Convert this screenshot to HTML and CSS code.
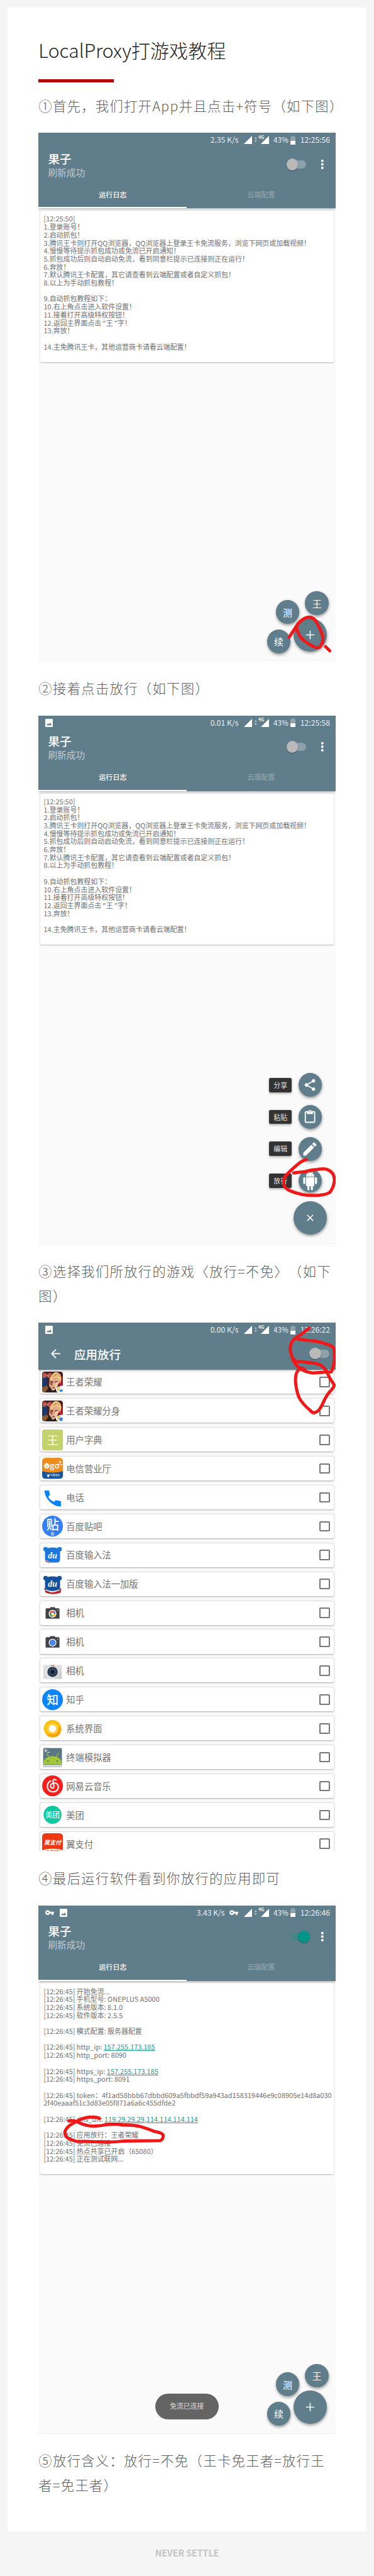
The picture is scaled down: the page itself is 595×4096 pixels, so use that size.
FILE: index.html
```html
<!DOCTYPE html>
<html lang="zh-CN">
<head>
<meta charset="utf-8">
<title>LocalProxy打游戏教程</title>
<link rel="stylesheet" href="styles.css">
</head>
<body>
<svg class="defs" aria-hidden="true">
  <symbol id="signals" viewBox="0 0 43 16">
    <path d="M14 1v14H0z" fill="#fff"/>
    <path d="M18.2 6.2l2-2.8 2 2.8zM18.2 9l2 2.8 2-2.8z" fill="#cfd8dc"/>
    <path d="M43 1v14H29z" fill="#fff"/>
    <path d="M24.5 0h10v7.6h-10z" fill="#607d8b"/>
  </symbol>
  <symbol id="battery" viewBox="0 0 9 15">
    <path d="M2.5 0h4v1.5H9V15H0V1.5h2.500z" fill="#8fa3ad"/>
    <path d="M0 8.700h9V15H0z" fill="#fff"/>
  </symbol>
  <symbol id="picture" viewBox="0 0 13 14">
    <rect width="13" height="14" rx="1.400" fill="#fff"/>
    <path d="M2.300 11l2.500-3.600L6.500 9.500 8.600 6.500 11 11z" fill="#607d8b"/>
  </symbol>
  <symbol id="key" viewBox="0 0 15 9">
    <path d="M8.200 3H15v3h-1.300v2.600h-3V6H8.200A4.200 4.200 0 1 1 8.200 3zM4.200 3a1.500 1.500 0 1 0 0 3 1.500 1.500 0 0 0 0-3z" fill="#fff" fill-rule="evenodd"/>
  </symbol>
  <symbol id="dots" viewBox="0 0 6 18">
    <circle cx="3" cy="3" r="2.200" fill="#fff"/><circle cx="3" cy="9" r="2.200" fill="#fff"/><circle cx="3" cy="15" r="2.200" fill="#fff"/>
  </symbol>
  <symbol id="plus" viewBox="0 0 16 16">
    <path d="M8 .8v14.400M.8 8h14.400" stroke="#fff" stroke-width="1.700"/>
  </symbol>
  <symbol id="hero" viewBox="0 0 36 36">
    <rect width="36" height="36" rx="5" fill="#4b1c22"/>
    <path d="M0 10l8-2 2 18-6 6L0 28z" fill="#1f3768"/>
    <path d="M27 8l9 2v17l-8-5z" fill="#b3142b"/>
    <path d="M6 36l5-10 12 3 4 7z" fill="#2a211f"/>
    <path d="M0 27l8-3 3 4-6 8H4q-4 0-4-4z" fill="#8a5a2c"/>
    <path d="M13 9l14-2 3 10-5 12-7 4-6-9z" fill="#e0a987"/>
    <path d="M14 15l5 2-2 8-4-4z" fill="#a85f4c"/>
    <path d="M26 13l3 5-5 11-6 4 3-7z" fill="#f3c9a8"/>
    <path d="M15 9Q19 0 26 1q8 3 7 12l-2 9-2-9-5-4-6 3-3 8z" fill="#edc983"/>
    <path d="M20 6l6-2 4 5M18 9l7-3" stroke="#b27d43" stroke-width="1" fill="none"/>
    <path d="M15 17l4 1.400M22 18l5-1.400M18 28l4-.4" stroke="#4b2319" stroke-width="1.400"/>
    <path d="M2 3h5l-.5 1.800H4l-.3 1 3 .2-.8 4H1l.3-1.700h2.600l.3-1H1zM11 3h5l-.5 1.800H13l-.3 1 3 .2-.8 4H10l.3-1.700h2.600l.3-1H10zM7 6h1V5h1.500v1h1v1.500h-1v1H8v-1H7z" fill="#d3352b" stroke="#f4d4c0" stroke-width=".4"/>
    <path d="M24 29q4-5 12-5v7q0 5-5 5h-4q-4-3-3-7z" fill="#fff"/>
    <path d="M33 26q-7-.5-7 5 .5 3 3 3-1-5 4-8z" fill="#f7bd2a"/>
    <path d="M30 31h4v-2l2 3q-1 3-4 3-3-1-2-4z" fill="#2f8fe6"/>
  </symbol>
  <symbol id="bear" viewBox="0 0 36 36">
    <path d="M2 8q0-4 4-4 3 0 4 2 8-2 16 0 1-2 4-2 4 0 4 4 0 3-3 4v13q0 6-6 6H11q-6 0-6-6V12Q2 11 2 8z"/>
  </symbol>
  <symbol id="camera" viewBox="0 0 36 36">
    <path d="M13 10l1.500-2h7l1.500 2h5q2 0 2 2v16H6V12q0-2 2-2z" fill="#424449"/>
    <circle cx="18" cy="19.500" r="6.700" fill="#fff"/><circle cx="27" cy="13.500" r=".9" fill="#ccc"/>
  </symbol>
</svg>

<main class="sheet">
  <h1 class="title">LocalProxy打游戏教程</h1>
  <div class="rule"></div>

  <p class="step">①首先，我们打开App并且点击+符号（如下图）</p>

  <section class="phone">
    <header class="bar">
      <div class="status">
        <span class="speed">2.35 K/s</span>
        <span class="net"><svg><use href="#signals"/></svg><b>4G</b></span>
        <span class="pct">43%</span><svg class="batt"><use href="#battery"/></svg><span class="clock">12:25:56</span>
      </div>
      <div class="head">
        <div class="names"><div class="app">果子</div><div class="sub">刷新成功</div></div>
        <span class="switch"></span>
        <svg class="more"><use href="#dots"/></svg>
      </div>
      <nav class="tabs"><span class="on">运行日志</span><span>云端配置</span></nav>
    </header>
    <div class="log guide">[12:25:50]
1.登录账号！
2.启动抓包！
3.腾讯王卡则打开QQ浏览器，QQ浏览器上登录王卡免流服务，浏览下网页或加载视频！
4.慢慢等待提示抓包成功或免流已开启通知！
5.抓包成功后则自动启动免流，看到同意栏提示已连接则正在运行！
6.奔放！
7.默认腾讯王卡配置，其它请查看到云端配置或者自定义抓包！
8.以上为手动抓包教程！

9.自动抓包教程如下：
10.右上角点击进入软件设置！
11.接着打开高级特权按钮！
12.返回主界面点击<i>“</i>王<i>”</i>字！
13.奔放！

14.主免腾讯王卡，其他运营商卡请看云端配置！</div>
    <span class="fab mini wang">王</span>
    <span class="fab mini ce">测</span>
    <span class="fab mini xu">续</span>
    <span class="fab big"><svg><use href="#plus"/></svg></span>
    <svg class="ink" viewBox="0 0 508 903.5"><path d="M429.100 863L444.200 840Q450 833 457 830Q467 826 474 834Q482 846 487 863Q488 872 481 880.300Q477 882 470 878.500Q456 871 449 863Q441 851 442.200 843M491.600 879l7 7"/></svg>
  </section>

  <p class="step">②接着点击放行（如下图）</p>

  <section class="phone">
    <header class="bar">
      <div class="status">
        <svg class="pic"><use href="#picture"/></svg>
        <span class="speed">0.01 K/s</span>
        <span class="net"><svg><use href="#signals"/></svg><b>4G</b></span>
        <span class="pct">43%</span><svg class="batt"><use href="#battery"/></svg><span class="clock">12:25:58</span>
      </div>
      <div class="head">
        <div class="names"><div class="app">果子</div><div class="sub">刷新成功</div></div>
        <span class="switch"></span>
        <svg class="more"><use href="#dots"/></svg>
      </div>
      <nav class="tabs"><span class="on">运行日志</span><span>云端配置</span></nav>
    </header>
    <div class="log guide">[12:25:50]
1.登录账号！
2.启动抓包！
3.腾讯王卡则打开QQ浏览器，QQ浏览器上登录王卡免流服务，浏览下网页或加载视频！
4.慢慢等待提示抓包成功或免流已开启通知！
5.抓包成功后则自动启动免流，看到同意栏提示已连接则正在运行！
6.奔放！
7.默认腾讯王卡配置，其它请查看到云端配置或者自定义抓包！
8.以上为手动抓包教程！

9.自动抓包教程如下：
10.右上角点击进入软件设置！
11.接着打开高级特权按钮！
12.返回主界面点击<i>“</i>王<i>”</i>字！
13.奔放！

14.主免腾讯王卡，其他运营商卡请看云端配置！</div>
    <div class="dial">
      <div class="act"><span class="tip">分享</span><span class="fab mini"><svg viewBox="0 0 24 24"><path d="M18 16.080c-.76 0-1.440.3-1.960.77L8.910 12.700c.05-.23.090-.46.090-.7s-.04-.47-.09-.7l7.050-4.110A2.990 2.990 0 1 0 15 5c0 .24.040.47.090.7L8.040 9.810A3 3 0 1 0 8.040 14.190l7.120 4.160c-.05.21-.08.43-.08.65a2.920 2.920 0 1 0 2.920-2.920z"/></svg></span></div>
      <div class="act"><span class="tip">粘贴</span><span class="fab mini"><svg viewBox="0 0 24 24"><path d="M19 2h-4.180C14.400.84 13.300 0 12 0S9.600.84 9.180 2H5c-1.100 0-2 .9-2 2v16c0 1.100.9 2 2 2h14c1.100 0 2-.9 2-2V4c0-1.100-.9-2-2-2zm-7 0c.55 0 1 .45 1 1s-.45 1-1 1-1-.45-1-1 .45-1 1-1zm7 18H5V4h2v3h10V4h2z"/></svg></span></div>
      <div class="act"><span class="tip">编辑</span><span class="fab mini"><svg class="xl" viewBox="0 0 24 24"><path d="M3 17.250V21h3.750L17.810 9.940l-3.750-3.750zM20.710 7.040a1 1 0 0 0 0-1.410l-2.340-2.340a1 1 0 0 0-1.410 0l-1.830 1.830 3.750 3.750z"/></svg></span></div>
      <div class="act"><span class="tip">放行</span><span class="fab mini"><svg class="droid" viewBox="0 0 24 28"><path d="M6 9h12v12q0 1-1 1h-1v4.500a1.500 1.500 0 0 1-3 0V22h-2v4.500a1.500 1.500 0 0 1-3 0V22H7q-1 0-1-1zM3.500 9Q5 9 5 10.500v7a1.500 1.500 0 0 1-3 0v-7Q2 9 3.500 9zM20.500 9q1.500 0 1.500 1.500v7a1.500 1.500 0 0 1-3 0v-7Q19 9 20.500 9zM6 8q0-3.700 3-5L8 1l.6-.4L10 2.600q2-.6 4 0L15.400.6 16 1l-1 2q3 1.300 3 5zM9 5v1h1V5zm5 0v1h1V5z"/></svg></span></div>
    </div>
    <span class="fab big close"><svg><use href="#plus"/></svg></span>
    <svg class="ink" viewBox="0 0 508 903.5"><path d="M458.900 759.100Q451 761 444.200 767Q431 778 424 786Q418 793 420.500 802.500Q422 809 432 813Q451 821 472.800 820.500Q492 820 499 815Q506 806 506.700 794.100Q507 782 495.200 776.500Q490 774 478 776Q465 777 458 779.500L436.900 782.100"/></svg>
  </section>

  <p class="step">③选择我们所放行的游戏〈放行=不免〉（如下图）</p>

  <section class="phone">
    <header class="bar short">
      <div class="status">
        <svg class="pic"><use href="#picture"/></svg>
        <span class="speed">0.00 K/s</span>
        <span class="net"><svg><use href="#signals"/></svg><b>4G</b></span>
        <span class="pct">43%</span><svg class="batt"><use href="#battery"/></svg><span class="clock">12:26:22</span>
      </div>
      <div class="head2">
        <svg class="back" viewBox="0 0 16 16"><path d="M16 7H3.800l5.600-5.600L8 0 0 8l8 8 1.400-1.400L3.800 9H16z" fill="#fff"/></svg>
        <span class="app">应用放行</span>
        <span class="switch"></span>
      </div>
    </header>
    <ul class="apps">
      <li><svg viewBox="0 0 36 36"><use href="#hero"/></svg><span>王者荣耀</span><i></i></li>
      <li><svg viewBox="0 0 36 36"><use href="#hero"/><path d="M30 29h5v6h-5z" fill="#3f84dd"/></svg><span>王者荣耀分身</span><i></i></li>
      <li><svg viewBox="0 0 36 36"><rect width="36" height="36" rx="4" fill="#c3d26b"/><text x="18" y="25.500" font-size="20" fill="#fff">王</text></svg><span>用户字典</span><i></i></li>
      <li><svg viewBox="0 0 36 36"><rect width="36" height="36" rx="6" fill="#ee8d1c"/><path d="M0 23q18 5 36 0v7q0 6-6 6H6q-6 0-6-6z" fill="#17569f"/><circle cx="8" cy="14" r="4.700" fill="#fff"/><text x="8" y="16" font-size="5.500" fill="#ee8d1c">欢</text><text x="21.500" y="18.500" font-size="14" fill="#fff" class="go">go</text><circle cx="31" cy="7" r="1.700" fill="#fff"/><circle cx="29" cy="11" r="1.300" fill="#fff"/><circle cx="33" cy="11.500" r="1.300" fill="#fff"/><path d="M7 28l3 1.500 4-2-3 6H9.500l-.5-3z" fill="#fff"/><text x="22" y="31.500" font-size="4" fill="#fff">中国电信</text></svg><span>电信营业厅</span><i></i></li>
      <li><svg viewBox="0 0 36 36"><path d="M4 6.500h8l1.500 8-3 3q4 6 10 8.500l3-3 9 2v9q-10 .5-19-8T4 6.500z" fill="#0a84f5"/></svg><span>电话</span><i></i></li>
      <li><svg viewBox="0 0 36 36"><circle cx="18" cy="18" r="18" fill="#3580f6"/><text x="18" y="23.500" font-size="22" fill="#fff" class="med">贴</text><path d="M15.300 30l2.700-2 2.700 2M16 31h4M16.400 31v2.800h3.200V31" stroke="#fff" stroke-width=".9" fill="none"/></svg><span>百度贴吧</span><i></i></li>
      <li><svg viewBox="0 0 36 36"><use href="#bear" fill="#1a77dc"/><path d="M5 27q6 0 8 4-6 .5-8-4z" fill="#fff"/><path d="M6 28l6 3" stroke="#d22" stroke-width="1.500"/><text x="18" y="24" font-size="15" fill="#fff" class="du">du</text></svg><span>百度输入法</span><i></i></li>
      <li><svg viewBox="0 0 36 36"><path d="M3 24q14 16 30 1l-1 8q-12 5-26 0z" fill="#c4262b"/><path d="M3 22q13 16 30 1" stroke="#fff" stroke-width="2" fill="none"/><use href="#bear" fill="#14529f"/><path d="M6 28q12 6 24 0" stroke="#fff" stroke-width="1.500" fill="none"/><text x="18" y="22.500" font-size="15" fill="#fff" class="du">du</text></svg><span>百度输入法一加版</span><i></i></li>
      <li><svg viewBox="0 0 36 36"><use href="#camera"/><circle cx="18" cy="19.500" r="3.800" fill="none" stroke="#e54b3c" stroke-width="2.700"/><path d="M14.200 19.500a3.800 3.800 0 0 0 3.800 3.800" stroke="#3aa757" stroke-width="2.700" fill="none"/><path d="M18 23.300a3.800 3.800 0 0 0 3.800-3.800" stroke="#fbc02d" stroke-width="2.700" fill="none"/><path d="M21.800 19.500a3.800 3.800 0 0 0-2-3.300" stroke="#3f7de8" stroke-width="2.700" fill="none"/></svg><span>相机</span><i></i></li>
      <li><svg viewBox="0 0 36 36"><use href="#camera"/><circle cx="18" cy="19.500" r="5.400" fill="#4a85e8"/></svg><span>相机</span><i></i></li>
      <li><svg viewBox="0 0 36 36"><rect x="2" y="8" width="32" height="24" rx="1.500" fill="#dedede"/><path d="M27 14l7 7v11H20z" fill="#cfcfcf"/><path d="M15 8h2v3h-2z" fill="#2b9ae0"/><path d="M17 8h2v3h-2z" fill="#f3b52f"/><path d="M19 8h2v3h-2z" fill="#e0452f"/><circle cx="18" cy="20" r="10.300" fill="#f4f4f4"/><circle cx="18" cy="20" r="9" fill="#2b3c50"/><circle cx="18" cy="20" r="5.500" fill="#3c526b"/><circle cx="18" cy="20" r="3.500" fill="#0f1c29"/></svg><span>相机</span><i></i></li>
      <li><svg viewBox="0 0 36 36"><circle cx="18" cy="18" r="18" fill="#0c84fb"/><text x="18" y="25.500" font-size="20.500" fill="#fff" class="med">知</text></svg><span>知乎</span><i></i></li>
      <li><svg viewBox="0 0 36 36"><circle cx="18" cy="18" r="15" fill="#fdc010"/><path d="M18 33q-7 0-10-4l8-4 12-11 5 3q0 16-15 16z" fill="#faa307"/><circle cx="18" cy="18" r="10" fill="#ffcf45"/><circle cx="18" cy="18" r="6" fill="#fff"/></svg><span>系统界面</span><i></i></li>
      <li><svg viewBox="0 0 36 36"><rect x="1.500" y="4" width="33" height="31" rx="1.500" fill="#c9d3da"/><rect x="2" y="1.500" width="32" height="29" rx="1.500" fill="#5c7784"/><path d="M2 29q1-10 9-12L7 11l1-.8 4.500 6.300q5.500-2 11 0L28 10.200l1 .8-4 6q8 2 9 12v.500H2z" fill="#a4c639"/><circle cx="10" cy="24" r="1.400" fill="#5c7784"/><circle cx="26" cy="24" r="1.400" fill="#5c7784"/><path d="M4 4l4 2-4 2M9 9h4" stroke="#fff" fill="none" stroke-width="1.200"/></svg><span>终端模拟器</span><i></i></li>
      <li><svg viewBox="0 0 36 36"><circle cx="18" cy="18" r="18" fill="#f5201e"/><path d="M24 8q-4-2.500-5 .5-.3 1 1 7 1.300 6-1.500 6.500-3.500.2-4-3.500 0-4.500 6-5.500 7 0 7.500 7-.5 8-9 8.500-9-.5-10-9Q9 12 15 9.500" stroke="#fff" stroke-width="2.200" fill="none" stroke-linecap="round"/></svg><span>网易云音乐</span><i></i></li>
      <li><svg viewBox="0 0 36 36"><circle cx="18" cy="18" r="15.500" fill="#0bcaa0"/><text x="18" y="22.700" font-size="12.500" fill="#fff" class="med">美团</text></svg><span>美团</span><i></i></li>
      <li><svg viewBox="0 0 36 36"><rect width="36" height="36" rx="6" fill="#ef3712"/><path d="M0 29q18-5 36 0v7H0z" fill="#fdf1dc"/><text x="18" y="19" font-size="9.800" fill="#fff" class="pay">翼支付</text><path d="M8 30.500h4M10 29v2M15 29.500h3M20 30h3M25 29.500l3 1" stroke="#e8452a" stroke-width="1.500"/></svg><span>翼支付</span><i></i></li>
    </ul>
    <svg class="ink" viewBox="0 0 508 903.5"><path d="M463.400 9.500L450 20Q443 24 438 28Q430 36 431 47Q433 57 437 66Q440 72 444 75Q453 84 468.700 86.200Q485 85 501 84.500Q506 76 506.500 60Q507 47 505 43Q500 38 490 36Q477 31 465 31L444.200 28.200M438 63L438.100 67Q450 66 461 68.200Q478 69 485 74Q490 78 493 83Q498 95 506.500 107Q505 112 498 119Q492 126 486 140Q480 152 475 153Q470 156 466 151Q451 138 446 128Q441 115 440 100Q440 85 445 81.500Q451 75 456 81"/></svg>
  </section>

  <p class="step">④最后运行软件看到你放行的应用即可</p>

  <section class="phone">
    <header class="bar">
      <div class="status">
        <svg class="key first"><use href="#key"/></svg>
        <svg class="pic second"><use href="#picture"/></svg>
        <span class="speed">3.43 K/s</span>
        <svg class="key"><use href="#key"/></svg>
        <span class="net"><svg><use href="#signals"/></svg><b>4G</b></span>
        <span class="pct">43%</span><svg class="batt"><use href="#battery"/></svg><span class="clock">12:26:46</span>
      </div>
      <div class="head">
        <div class="names"><div class="app">果子</div><div class="sub">刷新成功</div></div>
        <span class="switch active"></span>
        <svg class="more"><use href="#dots"/></svg>
      </div>
      <nav class="tabs"><span class="on">运行日志</span><span>云端配置</span></nav>
    </header>
    <div class="log output">[12:26:45] 开始免流...
[12:26:45] 手机型号: ONEPLUS A5000
[12:26:45] 系统版本: 8.1.0
[12:26:45] 软件版本: 2.5.5

[12:26:45] 模式配置: 服务器配置

[12:26:45] http_ip: <u>157.255.173.185</u>
[12:26:45] http_port: 8090

[12:26:45] https_ip: <u>157.255.173.185</u>
[12:26:45] https_port: 8091

[12:26:45] token：4f1ad58bbb67dbbd609a5fbbdf59a943ad158319446e9c08905e14d8a030
2f40eaaaf51c3d83e05f871a6a6c455dfde2

[12:26:45] dns_url: <u>119.29.29.29</u>,<u>114.114.114.114</u>

[12:26:45] 应用放行：王者荣耀
[12:26:45] 免流已连接
[12:26:45] 热点共享已开启（65080）
[12:26:45] 正在测试联网...</div>
    <span class="toast">免流已连接</span>
    <span class="fab mini wang">王</span>
    <span class="fab mini ce">测</span>
    <span class="fab mini xu">续</span>
    <span class="fab big"><svg><use href="#plus"/></svg></span>
    <svg class="ink" viewBox="0 0 508 903.5"><path d="M52.400 368.300Q62 367 69 371Q82 377 95 377.300Q107 377 117.700 374.500Q132 373 146.200 375.300Q163 375 174.800 378Q188 382 199.300 386.500Q214 389 213.800 394Q213 401 208.300 402L146.200 402.700Q128 405 113.600 404.300L64.600 403Q53 400 49 396.500Q44 391 46 385Q50 376 66 369Q72 365 80 363Q91 361 97 362Q102 362 104.600 364.300"/></svg>
  </section>

  <p class="step">⑤放行含义：放行=不免（王卡免王者=放行王者=免王者）</p>
</main>
<footer class="foot">NEVER SETTLE</footer>
</body>
</html>
```

FILE: styles.css
```css
/* 1rem is one sixty-fourth of the window's width */
html { font-size: 1.5625vw; }
* { box-sizing: border-box; }
body {
  margin: 0;
  background: #f5f5f5;
  font-family: "Noto Sans CJK SC", sans-serif;
  font-size: 1.2rem;
  text-spacing-trim: space-all;
}
.defs { position: absolute; width: 0; height: 0; }

.sheet {
  margin: 1.27rem 1.27rem 0;
  padding: 4.6rem 5.33rem 3.29rem;
  background: #fff;
}
.title {
  margin: 0;
  height: 5.2rem;
  line-height: 5.2rem;
  font-size: 3.24rem;
  font-weight: 300;
  color: #1c1c1c;
  white-space: nowrap;
}
.rule { width: 12.86rem; height: .54rem; margin-top: 2.45rem; background: #b20304; }
.step {
  margin: 2.56rem -.6rem 2.56rem 0;
  font-size: 2.29rem;
  line-height: 4.18rem;
  letter-spacing: .148rem;
  font-weight: 300;
  color: #606060;
}
.rule + .step { margin-top: 1.95rem; white-space: nowrap; }

.phone {
  position: relative;
  width: 50.8rem;
  height: 90.35rem;
  overflow: hidden;
  background: #fafafa;
  box-shadow: inset 0 -.1rem #f0f0f0;
}
.bar {
  position: relative;
  display: flex;
  flex-direction: column;
  height: 12.9rem;
  background: #607d8b;
  box-shadow: 0 .1rem .4rem rgba(0, 0, 0, .35);
}
.bar.short { height: 8.08rem; z-index: 1; }
.status {
  display: flex;
  align-items: center;
  height: 2.46rem;
  padding: 0 .8rem 0 1.15rem;
  color: #eceff1;
  font-size: 1.31rem;
  line-height: 2.46rem;
  white-space: nowrap;
}
.pic { width: 1.3rem; height: 1.4rem; }
.pic.second { margin-left: .95rem; }
.key { width: 1.5rem; height: .9rem; margin-left: .85rem; }
.key.first { margin-left: 0; }
.speed { margin-left: auto; }
.net { position: relative; display: flex; width: 4.3rem; margin: 0 .8rem 0 .9rem; }
.net svg { width: 4.3rem; height: 1.6rem; }
.net b { position: absolute; left: 2.5rem; top: -.05rem; font-size: .78rem; line-height: .8rem; }
.pct { width: 2.45rem; font-size: 1.26rem; }
.batt { width: .9rem; height: 1.5rem; margin: 0 .8rem 0 .45rem; }
.clock { width: 5.2rem; }

.head { display: flex; align-items: center; height: 5.8rem; padding: 0 1.9rem 0 1.62rem; }
.names { flex: 1; color: #fff; }
.app { font-size: 2rem; line-height: 2.7rem; font-weight: 500; color: #fff; }
.sub { font-size: 1.58rem; line-height: 2.2rem; color: #bfcbd1; }
.switch { position: relative; width: 3.4rem; height: 2rem; margin-right: 2.5rem; }
.switch::before {
  content: "";
  position: absolute;
  right: 0; top: .3rem;
  width: 2.9rem; height: 1.4rem;
  border-radius: .7rem;
  background: #8ea2ac;
}
.switch::after {
  content: "";
  position: absolute;
  left: 0; top: 0;
  width: 2rem; height: 2rem;
  border-radius: 50%;
  background: #b9b9b9;
  box-shadow: 0 .1rem .2rem rgba(0, 0, 0, .35);
}
.switch.active { left: .7rem; }
.switch.active::before { left: 0; right: auto; background: #48858a; }
.switch.active::after { left: 1.3rem; background: #009688; }
.more { width: .6rem; height: 1.8rem; }
.tabs { display: flex; flex: 1; }
.tabs span {
  flex: 1;
  padding-top: 1.35rem;
  text-align: center;
  font-size: 1.19rem;
  line-height: 1.8rem;
  font-weight: 500;
  color: #90a4ae;
}
.tabs .on { color: #fff; border-bottom: .26rem solid #fff; }

.log {
  margin: .4rem .28rem 0;
  padding: .68rem .6rem 0;
  border-radius: .3rem;
  background: #fff;
  box-shadow: 0 .1rem .2rem rgba(0, 0, 0, .28);
  color: #707070;
  font-size: 1.177rem;
  line-height: 1.367rem;
  white-space: pre;
}
.guide { height: 25.9rem; }
.output { height: 32.65rem; }
.log i { display: inline-block; width: .8rem; font-family: "Noto Sans", sans-serif; text-align: center; line-height: 1rem; }
.log u { color: #26998c; text-underline-offset: .1rem; }

.fab {
  display: flex;
  align-items: center;
  justify-content: center;
  border-radius: 50%;
  background: #607d8b;
  box-shadow: .05rem .25rem .45rem rgba(0, 0, 0, .38);
  color: #fff;
}
.mini { width: 4.04rem; height: 4.04rem; font-size: 1.6rem; }
.mini svg { width: 2.4rem; height: 2.4rem; fill: #fff; }
.mini .xl { width: 3rem; height: 3rem; }
.mini .droid { width: 3.1rem; height: 3.3rem; }
.wang, .ce, .xu, .big { position: absolute; }
.wang { left: 45.62rem; top: 78.41rem; }
.ce { left: 40.58rem; top: 79.9rem; }
.xu { left: 39.09rem; top: 84.92rem; }
.big { left: 43.61rem; top: 83rem; width: 5.7rem; height: 5.7rem; }
.big svg { width: 1.6rem; height: 1.6rem; }
.close svg { transform: rotate(45deg); }
.dial { position: absolute; right: 2.32rem; top: 61.16rem; display: grid; gap: 1.42rem; }
.act { display: flex; align-items: center; gap: 1.08rem; }
.tip {
  width: 3.94rem;
  height: 2.44rem;
  border-radius: .25rem;
  background: #333;
  box-shadow: 0 .2rem .4rem rgba(0, 0, 0, .3);
  color: #e6e6e6;
  font-size: 1.17rem;
  line-height: 2.44rem;
  text-align: center;
}
.ink { position: absolute; z-index: 2; inset: 0; width: 100%; height: 100%; fill: none; stroke: #f01818; stroke-width: 5.4; stroke-linecap: round; stroke-linejoin: round; }
.toast {
  position: absolute;
  left: 19.97rem;
  top: 83.5rem;
  width: 10.82rem;
  height: 4.45rem;
  border-radius: 2.22rem;
  background: #646464;
  color: #dedede;
  font-size: 1.17rem;
  line-height: 4.2rem;
  text-align: center;
}

.head2 { display: flex; align-items: center; height: 5.62rem; padding: 0 1.05rem 0 2.09rem; }
.back { width: 1.6rem; height: 1.6rem; margin-right: 2.4rem; }
.head2 .app { flex: 1; }
.head2 .switch { margin: 0; }
.apps { margin: 0; padding: 0 .28rem; list-style: none; }
.apps li {
  display: flex;
  align-items: center;
  height: 4.1rem;
  margin-bottom: .84rem;
  padding: 0 .68rem 0 .28rem;
  border-radius: .3rem;
  background: #fff;
  box-shadow: 0 .1rem .25rem rgba(0, 0, 0, .32);
}
.apps li > svg { width: 3.57rem; height: 3.57rem; margin-right: .6rem; overflow: visible; }
.apps span { flex: 1; font-size: 1.54rem; line-height: 2rem; color: #757575; }
.apps i { width: 1.8rem; height: 1.8rem; border: .22rem solid #777; border-radius: .2rem; }
.apps text { text-anchor: middle; font-family: "Noto Sans CJK SC", sans-serif; }
.apps .med { font-weight: 500; }
.apps .go { font-family: "Open Sans", sans-serif; font-weight: 600; }
.apps .du { font-family: "Liberation Serif", serif; font-weight: 700; font-style: italic; }
.apps .pay { font-weight: 700; font-style: italic; }

.foot {
  height: 7.45rem;
  line-height: 7.45rem;
  text-align: center;
  font-family: "Noto Sans CJK SC", sans-serif;
  font-size: 1.52rem;
  font-weight: 700;
  color: #c4c4c4;
}
```
